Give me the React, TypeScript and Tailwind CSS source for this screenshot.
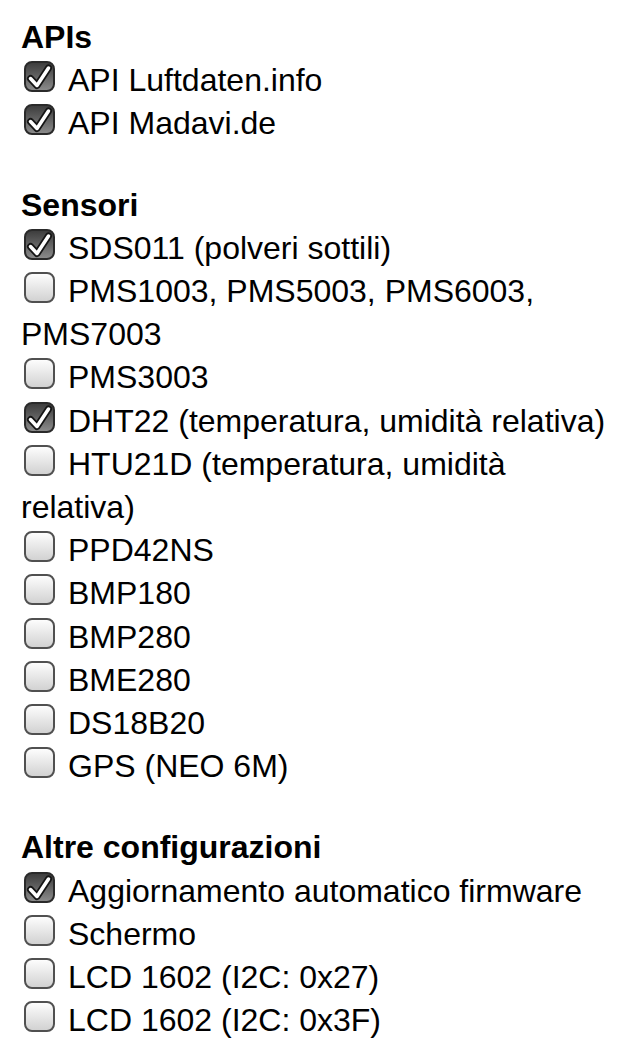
import React from "react";

type Item = { label: string; checked?: boolean };

const groups: { title: string; items: Item[] }[] = [
  {
    title: "APIs",
    items: [
      { label: "API Luftdaten.info", checked: true },
      { label: "API Madavi.de", checked: true },
    ],
  },
  {
    title: "Sensori",
    items: [
      { label: "SDS011 (polveri sottili)", checked: true },
      { label: "PMS1003, PMS5003, PMS6003, PMS7003" },
      { label: "PMS3003" },
      { label: "DHT22 (temperatura, umidità relativa)", checked: true },
      { label: "HTU21D (temperatura, umidità relativa)" },
      { label: "PPD42NS" },
      { label: "BMP180" },
      { label: "BMP280" },
      { label: "BME280" },
      { label: "DS18B20" },
      { label: "GPS (NEO 6M)" },
    ],
  },
  {
    title: "Altre configurazioni",
    items: [
      { label: "Aggiornamento automatico firmware", checked: true },
      { label: "Schermo" },
      { label: "LCD 1602 (I2C: 0x27)" },
      { label: "LCD 1602 (I2C: 0x3F)" },
    ],
  },
];

function Box({ checked }: { checked?: boolean }) {
  if (checked) {
    return (
      <span className="relative inline-block w-[31px] h-[31px] ml-[3px] mr-[13px] align-[-1px] rounded-[8px] border-2 border-[#2a2a2a] bg-gradient-to-b from-[#3e3e3e] to-[#8a8a8a]">
        <svg
          viewBox="0 0 31 31"
          className="absolute -left-[2px] -top-[2px] w-[31px] h-[31px]"
        >
          <path
            d="M6.5 17.5 L13 24.5 L24.5 7"
            fill="none"
            stroke="#151515"
            strokeWidth="7"
            strokeLinecap="round"
            strokeLinejoin="round"
          />
          <path
            d="M6.5 17.5 L13 24.5 L24.5 7"
            fill="none"
            stroke="#fff"
            strokeWidth="3.5"
            strokeLinecap="round"
            strokeLinejoin="round"
          />
        </svg>
      </span>
    );
  }
  return (
    <span className="inline-block w-[31px] h-[31px] ml-[3px] mr-[13px] align-[-1px] rounded-[8px] border-2 border-[#505050] bg-gradient-to-b from-[#fdfdfd] to-[#d2d2d2]" />
  );
}

export default function App() {
  return (
    <div className="min-h-screen bg-white px-[21px] pt-[16px] text-[32px] leading-[43.2px] text-black font-['Liberation_Sans',Arial,sans-serif]">
      {groups.map((g, i) => (
        <div key={g.title} className={i > 0 ? "mt-[38px]" : ""}>
          <div className="font-bold">{g.title}</div>
          {g.items.map((it) => (
            <div key={it.label}>
              <Box checked={it.checked} />
              {it.label}
            </div>
          ))}
        </div>
      ))}
    </div>
  );
}
